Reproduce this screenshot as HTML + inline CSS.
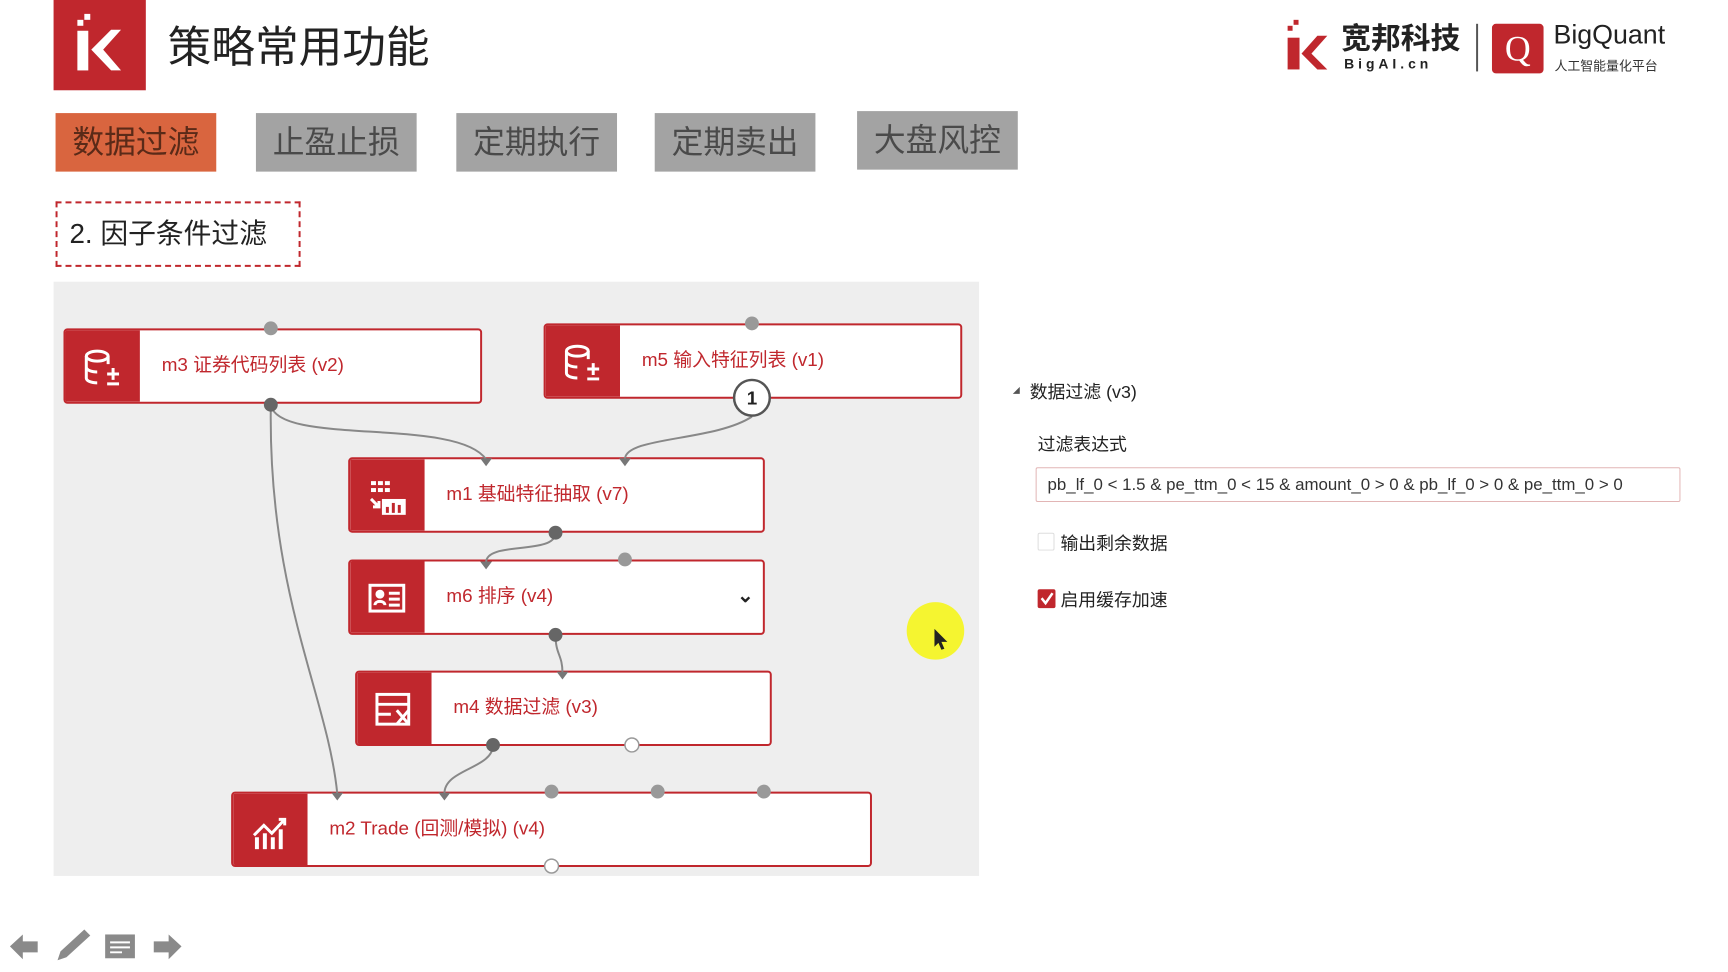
<!DOCTYPE html>
<html><head><meta charset="utf-8"><style>
*{margin:0;padding:0;box-sizing:border-box}
body{width:1728px;height:972px;background:#fff;position:relative;overflow:hidden;font-family:"Liberation Sans","Noto Sans CJK SC",sans-serif}
#w{position:absolute;left:0;top:0;width:1728px;height:972px;transform:scale(0.992);transform-origin:0 0}
.a{position:absolute}
.tab{position:absolute;height:59px;width:162px;background:#a3a3a3;color:#4a4a4a;font-size:32px;text-align:center;line-height:59px}
.node{position:absolute;height:76px;background:#fff;border:2px solid #c0272d;border-radius:4px;overflow:hidden}
.node .ic{position:absolute;left:0;top:0;bottom:0;width:75px;background:#c0272d}
.node .t{position:absolute;left:97px;top:0;line-height:72px;color:#c0272d;font-size:19px;white-space:nowrap}
.ic svg{position:absolute;left:18px;top:18px}
</style></head><body><div id="w">
<div class="a" style="left:54px;top:0;width:93px;height:91px;background:#c0272d"></div>
<svg class="a" style="left:54px;top:0" width="93" height="91"><g fill="#fff"><rect x="24" y="20" width="6" height="6"/><rect x="31" y="14" width="6" height="6"/><rect x="24" y="31" width="11" height="40"/><polygon points="38,50 58,30 68,30 50,50 68,71 58,71"/></g></svg>
<div class="a" style="left:169px;top:22px;font-size:44px;color:#222;line-height:54px">策略常用功能</div>

<svg class="a" style="left:1290px;top:18px" width="52" height="56"><g fill="#c0272d"><rect x="8" y="8" width="5" height="5"/><rect x="14" y="2" width="5" height="5"/><rect x="8" y="20" width="12" height="32"/><polygon points="22,36 38,18 48,18 32,36 48,52 38,52"/></g></svg>
<div class="a" style="left:1352px;top:22px;font-size:30px;font-weight:bold;color:#222;line-height:36px">宽邦科技</div>
<div class="a" style="left:1355px;top:56px;font-size:14px;font-weight:bold;color:#222;letter-spacing:4px">BigAI.cn</div>
<div class="a" style="left:1488px;top:24px;width:2px;height:48px;background:#555"></div>
<div class="a" style="left:1504px;top:24px;width:52px;height:50px;background:#c0272d;border-radius:4px;color:#fff;font-size:36px;text-align:center;line-height:50px;font-family:'Liberation Serif',serif">Q</div>
<div class="a" style="left:1566px;top:18px;font-size:27px;color:#222;line-height:34px">BigQuant</div>
<div class="a" style="left:1567px;top:56px;font-size:13px;color:#333">人工智能量化平台</div>

<div class="tab" style="left:56px;top:114px;background:#d9653f;color:#5a2a18">数据过滤</div>
<div class="tab" style="left:258px;top:114px">止盈止损</div>
<div class="tab" style="left:460px;top:114px">定期执行</div>
<div class="tab" style="left:660px;top:114px">定期卖出</div>
<div class="tab" style="left:864px;top:112px">大盘风控</div>

<div class="a" style="left:56px;top:203px;width:247px;height:66px;border:2px dashed #c0272d;font-size:28px;color:#222;line-height:62px;padding-left:12px">2. 因子条件过滤</div>

<div class="a" style="left:54px;top:284px;width:933px;height:599px;background:#eeeeee"></div>

<div class="node" style="left:64px;top:331px;width:422px"><div class="ic"><svg width="40" height="40" viewBox="0 0 40 40" fill="none" stroke="#fff" stroke-width="3"><ellipse cx="14" cy="8" rx="11" ry="5"/><path d="M3 8v22c0 3 5 5 11 5M25 8v8M3 19c0 3 5 5 11 5"/><path d="M30 20v12M24 26h12M24 36h12"/></svg></div><div class="t">m3 证券代码列表 (v2)</div></div>
<div class="node" style="left:548px;top:326px;width:422px"><div class="ic"><svg width="40" height="40" viewBox="0 0 40 40" fill="none" stroke="#fff" stroke-width="3"><ellipse cx="14" cy="8" rx="11" ry="5"/><path d="M3 8v22c0 3 5 5 11 5M25 8v8M3 19c0 3 5 5 11 5"/><path d="M30 20v12M24 26h12M24 36h12"/></svg></div><div class="t">m5 输入特征列表 (v1)</div></div>
<div class="node" style="left:351px;top:461px;width:420px"><div class="ic"><svg width="40" height="40" viewBox="0 0 40 40"><g fill="#fff"><rect x="3" y="4" width="5" height="4"/><rect x="10" y="4" width="5" height="4"/><rect x="17" y="4" width="5" height="4"/><rect x="3" y="11" width="5" height="4"/><rect x="10" y="11" width="5" height="4"/><rect x="17" y="11" width="5" height="4"/><rect x="14" y="22" width="24" height="16"/></g><g fill="#c0272d"><rect x="18" y="30" width="3" height="6"/><rect x="24" y="26" width="3" height="10"/><rect x="30" y="28" width="3" height="8"/></g><path d="M3 22l8 8M11 24v6h-6" stroke="#fff" stroke-width="3" fill="none"/></svg></div><div class="t">m1 基础特征抽取 (v7)</div></div>
<div class="node" style="left:351px;top:564px;width:420px"><div class="ic"><svg width="40" height="40" viewBox="0 0 40 40" fill="none" stroke="#fff" stroke-width="3"><rect x="2" y="6" width="34" height="26"/><circle cx="12" cy="15" r="3" fill="#fff"/><path d="M7 26c0-5 10-5 10 0M21 14h11M21 20h11M21 26h11"/></svg></div><div class="t">m6 排序 (v4)</div><div class="a" style="left:390px;top:22px;font-size:20px;font-weight:bold;color:#222">⌄</div></div>
<div class="node" style="left:358px;top:676px;width:420px"><div class="ic"><svg width="40" height="40" viewBox="0 0 40 40" fill="none" stroke="#fff" stroke-width="3"><rect x="2" y="4" width="32" height="30"/><path d="M2 14h32M2 24h14M22 20l12 14M34 20l-12 14"/></svg></div><div class="t">m4 数据过滤 (v3)</div></div>
<div class="node" style="left:233px;top:798px;width:646px"><div class="ic"><svg width="40" height="40" viewBox="0 0 40 40" fill="#fff"><rect x="4" y="26" width="4" height="12"/><rect x="12" y="22" width="4" height="16"/><rect x="20" y="26" width="4" height="12"/><rect x="28" y="18" width="4" height="20"/><path d="M3 24l10-10 8 8 13-14M28 8h6v6" stroke="#fff" stroke-width="3" fill="none"/></svg></div><div class="t">m2 Trade (回测/模拟) (v4)</div></div>

<svg class="a" style="left:0;top:0" width="1000" height="900">
<g fill="none" stroke="#888" stroke-width="2">
<path d="M273 408C280 450 460 420 490 463"/>
<path d="M273 408C270 600 330 700 340 800"/>
<path d="M758 420C720 445 630 440 630 463"/>
<path d="M560 537C560 560 490 545 490 567"/>
<path d="M560 640C560 660 567 660 567 678"/>
<path d="M497 751C497 775 448 775 448 800"/>
</g>
<g fill="#999"><circle cx="273" cy="331" r="7"/><circle cx="758" cy="326" r="7"/><circle cx="630" cy="564" r="7"/><circle cx="556" cy="798" r="7"/><circle cx="663" cy="798" r="7"/><circle cx="770" cy="798" r="7"/></g>
<g fill="#666"><circle cx="273" cy="408" r="7"/><circle cx="560" cy="537" r="7"/><circle cx="560" cy="640" r="7"/><circle cx="497" cy="751" r="7"/></g>
<g fill="#777"><path d="M484 462h12l-6 8zM624 462h12l-6 8zM484 566h12l-6 8zM561 677h12l-6 8zM334 799h12l-6 8zM442 799h12l-6 8z"/></g>
<g fill="#fff" stroke="#999" stroke-width="1.5"><circle cx="637" cy="751" r="7"/><circle cx="556" cy="873" r="7"/></g>
<circle cx="758" cy="401" r="18" fill="#fff" stroke="#555" stroke-width="2.5"/>
<text x="758" y="408" font-size="19" font-weight="bold" text-anchor="middle" fill="#222" font-family="Liberation Sans">1</text>
<circle cx="943" cy="636" r="29" fill="#f5f530"/>
<path d="M942 634v18l4-4 3 7 3-1-3-7h6z" fill="#222"/>
</svg>

<div class="a" style="left:1021px;top:390px;width:0;height:0;border-left:7px solid transparent;border-bottom:7px solid #555"></div>
<div class="a" style="left:1038px;top:381px;font-size:18px;color:#222">数据过滤 (v3)</div>
<div class="a" style="left:1046px;top:434px;font-size:18px;color:#222">过滤表达式</div>
<div class="a" style="left:1044px;top:471px;width:650px;height:35px;border:1px solid #e2b5b5;border-radius:2px;font-size:17px;color:#333;line-height:33px;padding-left:11px">pb_lf_0 &lt; 1.5 &amp; pe_ttm_0 &lt; 15 &amp; amount_0 &gt; 0 &amp; pb_lf_0 &gt; 0 &amp; pe_ttm_0 &gt; 0</div>
<div class="a" style="left:1046px;top:537px;width:17px;height:18px;border:1px solid #ddd;border-radius:2px"></div>
<div class="a" style="left:1069px;top:534px;font-size:18px;color:#222">输出剩余数据</div>
<div class="a" style="left:1046px;top:594px;width:18px;height:19px;background:#c0272d;border-radius:2px"><svg width="18" height="19"><path d="M4 9l4 5 7-10" stroke="#fff" stroke-width="2.5" fill="none"/></svg></div>
<div class="a" style="left:1069px;top:591px;font-size:18px;color:#222">启用缓存加速</div>

<svg class="a" style="left:0;top:935px" width="200" height="37" fill="#8a8a8a">
<path d="M10 19l13-12v7h15v11h-15v7z"/>
<path d="M58 33l3-9 24-22 6 6-24 22z"/>
<rect x="106" y="7" width="30" height="24"/><path d="M111 15h20M111 20h20M111 25h12" stroke="#fff" stroke-width="2"/>
<path d="M183 19l-13-12v7h-15v11h15v7z"/>
</svg>
</div></body></html>
